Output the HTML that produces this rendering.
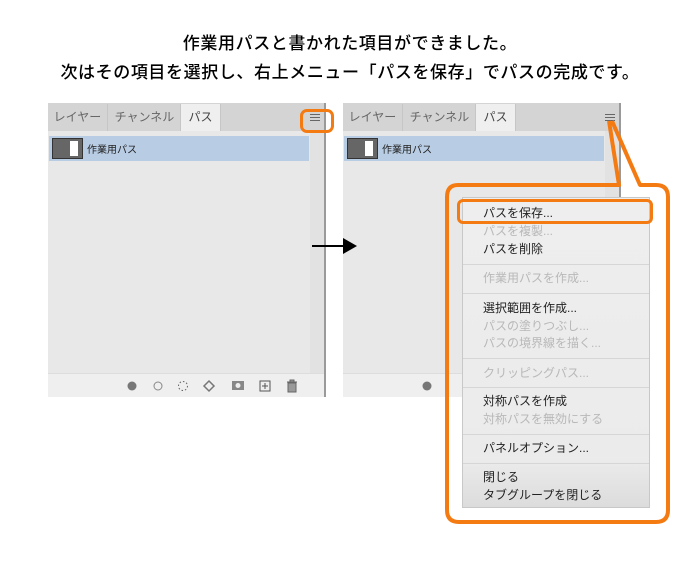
<!DOCTYPE html>
<html><head><meta charset="utf-8"><style>
*{margin:0;padding:0;box-sizing:border-box}
body{width:700px;height:579px;background:#fff;position:relative;overflow:hidden;font-family:"Liberation Sans","Noto Sans CJK JP",sans-serif}
.t{position:absolute;left:0;width:700px;text-align:center;font-size:17px;color:#000;white-space:nowrap;letter-spacing:0.6px;font-weight:500}
.panel{position:absolute;top:103px;width:278px;height:294px;background:#e8e8e8;border-right:2px solid #9a9a9a}
.tabs{position:absolute;left:0;top:0;width:100%;height:28px;background:#d4d4d4}
.tab{position:absolute;top:1px;height:27px;font-size:12px;color:#666;line-height:27px;text-align:center;border-right:1px solid #c6c6c6}
.tab.sel{background:#efefef;color:#444}
.row{position:absolute;left:1px;top:33px;width:260px;height:25px;background:#b8cce4}
.thumb{position:absolute;left:3px;top:2px;width:31px;height:21px;background:#666;border:1px solid #333}
.thumb i{position:absolute;left:17px;top:2px;width:8px;height:15px;background:#fff}
.row span{position:absolute;left:38px;top:5px;font-size:10px;color:#222}
.scroll{position:absolute;left:262px;top:28px;width:14px;height:242px;background:#e2e2e2}
.bot{position:absolute;left:0;bottom:0;width:100%;height:24px;background:#efefef;border-top:1px solid #ddd}
.menu{position:absolute;left:462px;top:197px;width:188px;height:311px;background:linear-gradient(#eeeeee,#ebebeb 85%,#dcdcdc);border:1px solid #c8c8c8}
.mi{position:absolute;left:20px;font-size:12px;color:#222;white-space:nowrap}
.mi.d{color:#b8b8b8}
.sep{position:absolute;left:0;width:100%;height:1px;background:#d6d6d6}
</style></head><body>
<div class="t" style="top:29px">作業用パスと書かれた項目ができました。</div>
<div class="t" style="top:58px">次はその項目を選択し、右上メニュー「パスを保存」でパスの完成です。</div>

<div class="panel" style="left:48px">
 <div class="tabs">
  <div class="tab" style="left:0;width:60px">レイヤー</div>
  <div class="tab" style="left:61px;width:72px">チャンネル</div>
  <div class="tab sel" style="left:133px;width:40px">パス</div>
  <div style="position:absolute;left:262px;top:11px;width:10px;height:7px;border-top:1px solid #666;border-bottom:1px solid #666"><div style="margin-top:2px;height:1px;background:#666"></div></div>
 </div>
 <div class="scroll"></div>
 <div class="row"><div class="thumb"><i></i></div><span>作業用パス</span></div>
 <div class="bot">
  <svg width="278" height="24" style="position:absolute;left:0;top:0">
   <circle cx="84" cy="12" r="4.5" fill="#777"/>
   <circle cx="110" cy="12" r="4" fill="none" stroke="#888"/>
   <circle cx="135" cy="12" r="4.5" fill="none" stroke="#666" stroke-dasharray="1.5 2"/>
   <path d="M161 7 L166 12 L161 17 L156 12Z" fill="none" stroke="#777" stroke-width="1.5"/>
   <rect x="184" y="7" width="12" height="9" fill="#888"/><circle cx="190" cy="11.5" r="2.5" fill="#eee"/>
   <rect x="212" y="7" width="10" height="10" fill="none" stroke="#555"/><path d="M217 9v6M214 12h6" stroke="#555"/>
   <path d="M239 8h10M242 8v-2h4v2M240 9h8v9h-8z" fill="#999" stroke="#666"/>
  </svg>
 </div>
</div>
<div style="position:absolute;left:300px;top:109px;width:34px;height:24px;border:3px solid #f47a12;border-radius:7px"></div>

<div class="panel" style="left:343px">
 <div class="tabs">
  <div class="tab" style="left:0;width:60px">レイヤー</div>
  <div class="tab" style="left:61px;width:72px">チャンネル</div>
  <div class="tab sel" style="left:133px;width:40px">パス</div>
  <div style="position:absolute;left:262px;top:11px;width:10px;height:7px;border-top:1px solid #666;border-bottom:1px solid #666"><div style="margin-top:2px;height:1px;background:#666"></div></div>
 </div>
 <div class="scroll"></div>
 <div class="row"><div class="thumb"><i></i></div><span>作業用パス</span></div>
 <div class="bot"><svg width="100" height="24" style="position:absolute;left:0;top:0"><circle cx="84" cy="12" r="4.5" fill="#777"/></svg></div>
</div>

<svg width="700" height="579" style="position:absolute;left:0;top:0">
 <path d="M312 246H345" stroke="#000" stroke-width="2"/><path d="M343 238L357 246L343 254Z" fill="#000"/>
 <path d="M609 121 L619 185 L458 185 Q447 185 447 197 L447 510 Q447 522 459 522 L656 522 Q668 522 668 510 L668 197 Q668 185 656 185 L640 185 L612 121" fill="none" stroke="#f47a12" stroke-width="4" stroke-linejoin="round"/>
</svg>

<div class="menu">
 <div class="mi" style="top:6px">パスを保存...</div>
 <div class="mi d" style="top:24px">パスを複製...</div>
 <div class="mi" style="top:42px">パスを削除</div>
 <div class="sep" style="top:66px"></div>
 <div class="mi d" style="top:71px">作業用パスを作成...</div>
 <div class="sep" style="top:95px"></div>
 <div class="mi" style="top:101px">選択範囲を作成...</div>
 <div class="mi d" style="top:119px">パスの塗りつぶし...</div>
 <div class="mi d" style="top:136px">パスの境界線を描く...</div>
 <div class="sep" style="top:160px"></div>
 <div class="mi d" style="top:166px">クリッピングパス...</div>
 <div class="sep" style="top:189px"></div>
 <div class="mi" style="top:194px">対称パスを作成</div>
 <div class="mi d" style="top:212px">対称パスを無効にする</div>
 <div class="sep" style="top:236px"></div>
 <div class="mi" style="top:241px">パネルオプション...</div>
 <div class="sep" style="top:265px"></div>
 <div class="mi" style="top:270px">閉じる</div>
 <div class="mi" style="top:288px">タブグループを閉じる</div>
</div>
<div style="position:absolute;left:457px;top:199px;width:196px;height:25px;border:3px solid #f47a12;border-radius:6px"></div>
</body></html>
